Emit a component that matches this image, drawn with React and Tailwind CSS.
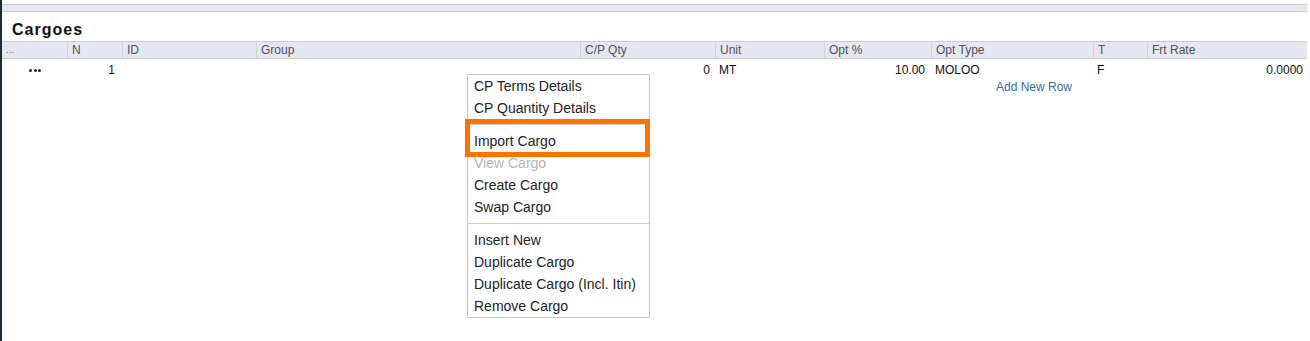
import React from "react";

const cols = "grid-cols-[65px_55px_134px_324px_135px_109px_107px_162px_54px_160px]";

const headers = ["...", "N", "ID", "Group", "C/P Qty", "Unit", "Opt %", "Opt Type", "T", "Frt Rate"];

const menuTop = ["CP Terms Details", "CP Quantity Details"];
const menuMid = [
  { label: "Import Cargo" },
  { label: "View Cargo", disabled: true },
  { label: "Create Cargo" },
  { label: "Swap Cargo" },
];
const menuBottom = ["Insert New", "Duplicate Cargo", "Duplicate Cargo (Incl. Itin)", "Remove Cargo"];

const MenuItem = ({ label, disabled }) => (
  <div
    className={`h-[22px] leading-[22px] px-[6px] ${
      disabled ? "text-[#b4b4b4]" : "text-[#222]"
    }`}
  >
    {label}
  </div>
);

const App = () => {
  return (
    <div
      className="flex h-[341px] w-full bg-white"
      style={{ fontFamily: '"Liberation Sans", Arial, sans-serif' }}
    >
      <div className="w-[2px] shrink-0 bg-[#1f2a33]" />
      <div className="relative flex-1 pr-[3px]">
        <div className="mt-[4px] h-[8px] border-y border-[#c9ccd4] bg-[#e6e7ed]" />

        <div className="h-[29px] pl-[10px] pt-[6px] text-[16px] font-bold tracking-[1px] text-[#111]">
          Cargoes
        </div>

        <div className={`grid ${cols} h-[18px] border-y border-[#c9ccd4] bg-[#e6e7ee] text-[12px] leading-[16px] text-[#505560]`}>
          {headers.map((h, i) => (
            <div
              key={h}
              className={`pl-[4px] ${i > 0 ? "border-l border-[#d2d5de]" : ""} ${
                i === 0 ? "text-[10px] text-[#7a7f8a]" : ""
              }`}
            >
              {h}
            </div>
          ))}
        </div>

        <div className={`grid ${cols} h-[22px] items-center text-[12px] text-[#111]`}>
          <div className="flex gap-[1.5px] pl-[27px]">
            <span className="h-[3px] w-[3px] rounded-full bg-[#222]" />
            <span className="h-[3px] w-[3px] rounded-full bg-[#222]" />
            <span className="h-[3px] w-[3px] rounded-full bg-[#222]" />
          </div>
          <div className="pr-[7px] text-right">1</div>
          <div />
          <div />
          <div className="pr-[5px] text-right">0</div>
          <div className="pl-[4px]">MT</div>
          <div className="pr-[6px] text-right">10.00</div>
          <div className="pl-[4px]">MOLOO</div>
          <div className="pl-[4px]">F</div>
          <div className="pr-[4px] text-right">0.0000</div>
        </div>
        <div className="pl-[994px] text-[12px] leading-[12px] text-[#3c6aa3]">Add New Row</div>

        <div className="absolute left-[465px] top-[74px] w-[183px] border border-[#c8c8c8] bg-white text-[14px]">
          {menuTop.map((l) => (
            <MenuItem key={l} label={l} />
          ))}
          <div className="my-[5px] border-t border-[#d0d0d0]" />
          {menuMid.map((m) => (
            <MenuItem key={m.label} label={m.label} disabled={m.disabled} />
          ))}
          <div className="my-[5px] border-t border-[#d0d0d0]" />
          {menuBottom.map((l) => (
            <MenuItem key={l} label={l} />
          ))}
        </div>

        <div className="absolute left-[463px] top-[119px] h-[38px] w-[185px] border-[5px] border-[#ff7400]" />
      </div>
    </div>
  );
};

export default App;
